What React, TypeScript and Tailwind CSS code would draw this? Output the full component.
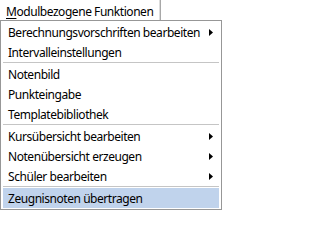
import React from "react";

type Item = { label: string; sub?: boolean; active?: boolean } | "sep";

const items: Item[] = [
  { label: "Berechnungsvorschriften bearbeiten", sub: true },
  { label: "Intervalleinstellungen" },
  "sep",
  { label: "Notenbild" },
  { label: "Punkteingabe" },
  { label: "Templatebibliothek" },
  "sep",
  { label: "Kursübersicht bearbeiten", sub: true },
  { label: "Notenübersicht erzeugen", sub: true },
  { label: "Schüler bearbeiten", sub: true },
  "sep",
  { label: "Zeugnisnoten übertragen", active: true },
];

function Arrow() {
  return (
    <svg width="4" height="7" viewBox="0 0 4 7" className="mr-[6px] shrink-0">
      <path d="M0 0 L4 3.5 L0 7 Z" fill="#000" />
    </svg>
  );
}

export default function App() {
  return (
    <div
      className="w-[222px] h-[210px] bg-white text-black text-[12px] leading-none tracking-[-0.45px] whitespace-nowrap overflow-hidden"
      style={{ fontFamily: '"Noto Sans", "Open Sans", sans-serif' }}
    >
      <div className="h-[20px] flex">
        <div className="w-[160px] h-full border-r border-[#dcdcdc] flex items-center pl-[6px] pt-[3px]">
          <span>
            <span className="underline underline-offset-[2px]">M</span>odulbezogene Funktionen
          </span>
        </div>
        <div className="w-[1px] h-full bg-[#a8a8a8]" />
      </div>
      <div className="w-[222px] h-[190px] border border-[#979797] p-[1px] flex flex-col">
        {items.map((it, i) =>
          it === "sep" ? (
            <div key={i} className="h-[2px] shrink-0 mx-[1px] border-t border-[#c5c5c5]" />
          ) : (
            <div
              key={i}
              className={
                "h-[20px] shrink-0 mx-[1px] flex items-center justify-between pl-[5px] pt-[1px] " +
                (it.active ? "bg-[#c0d3ec]" : "")
              }
            >
              <span>{it.label}</span>
              {it.sub ? <Arrow /> : null}
            </div>
          )
        )}
      </div>
    </div>
  );
}
